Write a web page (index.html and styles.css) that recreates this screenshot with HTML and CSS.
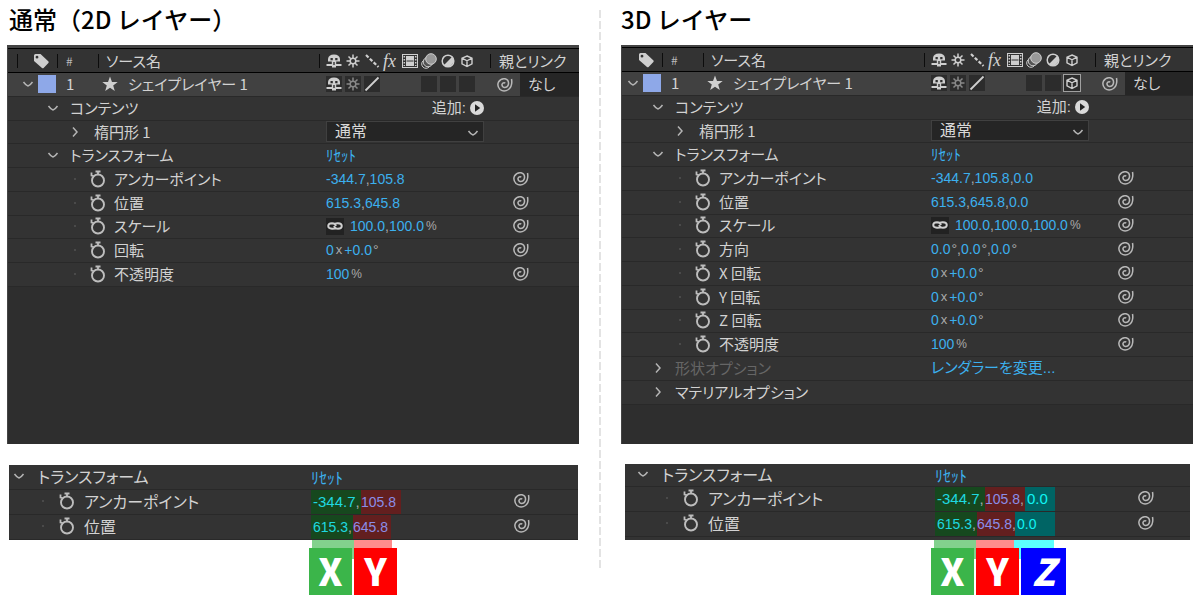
FILE: index.html
```html
<!DOCTYPE html>
<html lang="ja">
<head>
    <meta charset="UTF-8">
    <title>2D レイヤーと 3D レイヤー</title>
    <link rel="stylesheet" href="styles.css">
</head>
<body>
<!-- アイコン定義 -->
<svg class="defs" width="0" height="0" aria-hidden="true">
    <symbol id="tag" viewBox="0 0 16 16"><path fill="currentColor" fill-rule="evenodd" d="M1 2.5Q1 1 2.500 1H7.500L15.500 8.500Q16 9.200 15.400 9.900L10.600 15Q9.800 15.600 9 15L1 8ZM4 2.800A1.400 1.400 0 1 0 4 5.600A1.400 1.400 0 1 0 4 2.800Z"/></symbol>
    <symbol id="star" viewBox="0 0 16 16"><path fill="currentColor" d="M8 0.500L10 6H15.700L11.200 9.500L12.800 15L8 11.700L3.200 15L4.800 9.500L0.300 6H6Z"/></symbol>
    <symbol id="down" viewBox="0 0 12 12"><path fill="none" stroke="currentColor" stroke-width="1.5" d="M1.500 4Q4 7.500 6 8Q8 7.500 10.500 4"/></symbol>
    <symbol id="right" viewBox="0 0 12 12"><path fill="none" stroke="currentColor" stroke-width="1.5" d="M4 1.500L8 6L4 10.500"/></symbol>
    <symbol id="watch" viewBox="0 0 16 18"><g fill="none" stroke="currentColor"><circle cx="8" cy="10.500" r="6" stroke-width="1.900"/><path stroke-width="1.800" d="M5.500 1.500H10.500M8 1.500V5M1.500 2.500V5.500L3.500 6"/></g></symbol>
    <symbol id="whip" viewBox="0 0 16 16"><path fill="none" stroke="currentColor" stroke-width="1.500" d="M14.500 2Q15.800 9 11.500 12.500Q7 15.500 3 12.500Q-0.300 9 1.500 5Q4 1 8 1.800Q12 3 11.500 7Q10.800 10.500 7.500 10.500Q4.800 10 5 7.300Q6 5 8.300 6"/></symbol>
    <symbol id="shy" viewBox="0 0 16 16"><path fill="currentColor" fill-rule="evenodd" d="M2 8.500V6Q2.500 1.500 8 1.500Q13.500 1.500 14 6V8.500H10.200V11H15.500V13H10V14.500H6V13H0.500V11H5.800V8.500ZM4.500 5V7.200H6.800V5ZM9.200 5V7.200H11.500V5ZM7.300 9V12H8.700V9Z"/></symbol>
    <symbol id="sun" viewBox="0 0 16 16"><g fill="none" stroke="currentColor" stroke-width="1.500"><circle cx="8" cy="8" r="2.800"/><path d="M8 1.500V5M8 11V14.500M1.500 8H5M11 8H14.500M3.500 3.500L5.800 5.800M10.200 10.200L12.500 12.500M12.500 3.500L10.200 5.800M5.800 10.200L3.500 12.500"/></g></symbol>
    <symbol id="dots" viewBox="0 0 16 16"><path stroke="currentColor" stroke-width="2.200" stroke-dasharray="3.500 1.800" d="M2 2L14.500 14"/></symbol>
    <symbol id="line" viewBox="0 0 16 16"><path stroke="currentColor" stroke-width="1.800" d="M1.500 14.500L14.500 1.500"/></symbol>
    <symbol id="film" viewBox="0 0 16 16"><rect x="0.500" y="1.500" width="15" height="13" fill="none" stroke="currentColor"/><path fill="currentColor" d="M4 3H12V13H4Z"/><path stroke="currentColor" stroke-width="1.500" stroke-dasharray="1.500 1.500" d="M2.300 3V13M13.700 3V13"/><path stroke="#333" d="M4.500 8H11.500"/></symbol>
    <symbol id="blur" viewBox="0 0 16 16"><g stroke="currentColor"><circle cx="5" cy="11" r="4.300" fill="#333"/><circle cx="7" cy="9" r="4.800" fill="#555"/><circle cx="10" cy="6" r="5.300" fill="#999"/></g></symbol>
    <symbol id="adjust" viewBox="0 0 16 16"><circle cx="8" cy="8" r="5.800" fill="none" stroke="currentColor" stroke-width="1.500"/><path fill="currentColor" d="M12.200 3.800A6 6 0 0 1 3.800 12.200Z"/></symbol>
    <symbol id="cube" viewBox="0 0 16 16"><path fill="none" stroke="currentColor" stroke-width="1.400" d="M8 3L13 5.200V10.800L8 13.500L3 10.800V5.200ZM3 5.200L8 7.800L13 5.200M8 7.800V13.500"/></symbol>
    <symbol id="chain" viewBox="0 0 16 16"><path fill="none" stroke="currentColor" stroke-width="1.900" d="M9.500 9.500Q8 11 5 10.800Q1.200 10.500 1.200 8Q1.200 5.300 5 5.200Q8.500 5.200 8.800 8M6.500 6.500Q8 5 11 5.200Q14.800 5.500 14.800 8Q14.800 10.700 11 10.800Q7.500 10.800 7.200 8"/></symbol>
    <symbol id="play" viewBox="0 0 16 16"><circle cx="8" cy="8" r="7" fill="currentColor"/><path fill="#222" d="M6 4.200L11.200 8L6 11.800Z"/></symbol>
</svg>

<main class="compare">
    <section class="side">
        <h2>通常（2D レイヤー）</h2>
        <div class="timeline timeline-2d">
            <div class="head">
                <div class="col col-tag"><svg class="icon"><use href="#tag"/></svg></div>
                <div class="col col-num">#</div>
                <div class="col col-name">ソース名</div>
                <div class="col col-switch">
                    <svg class="icon"><use href="#shy"/></svg>
                    <svg class="icon"><use href="#sun"/></svg>
                    <svg class="icon"><use href="#dots"/></svg>
                    <i class="fx">fx</i>
                    <svg class="icon"><use href="#film"/></svg>
                    <svg class="icon"><use href="#blur"/></svg>
                    <svg class="icon"><use href="#adjust"/></svg>
                    <svg class="icon"><use href="#cube"/></svg>
                </div>
                <div class="col col-parent">親とリンク</div>
            </div>
            <div class="row layer">
                <div class="label">
                    <svg class="arrow"><use href="#down"/></svg>
                    <span class="swatch"></span>
                    <span class="num">1</span>
                    <svg class="icon"><use href="#star"/></svg>
                    <span class="name">シェイプレイヤー 1</span>
                </div>
                <div class="switches">
                    <button class="sw" aria-label="シャイ"><svg class="icon"><use href="#shy"/></svg></button>
                    <button class="sw dim" aria-label="コラップス"><svg class="icon"><use href="#sun"/></svg></button>
                    <button class="sw" aria-label="画質"><svg class="icon"><use href="#line"/></svg></button>
                    <span class="blank"></span>
                    <span class="blank"></span>
                    <button class="sw" aria-label="モーションブラー"></button>
                    <button class="sw" aria-label="調整レイヤー"></button>
                    <button class="sw" aria-label="3D レイヤー"></button>
                </div>
                <div class="link">
                    <svg class="icon"><use href="#whip"/></svg>
                    <select class="parent" aria-label="親とリンク"><option>なし</option></select>
                </div>
            </div>
            <div class="row group">
                <div class="label"><svg class="arrow"><use href="#down"/></svg>コンテンツ</div>
                <div class="value add">追加:<button class="play" aria-label="追加"><svg class="icon"><use href="#play"/></svg></button></div>
            </div>
            <div class="row sub">
                <div class="label"><svg class="arrow"><use href="#right"/></svg>楕円形 1</div>
                <div class="value">
                    <div class="mode">
                        <select aria-label="描画モード"><option>通常</option></select>
                        <svg class="arrow"><use href="#down"/></svg>
                    </div>
                </div>
            </div>
            <div class="row group">
                <div class="label"><svg class="arrow"><use href="#down"/></svg>トランスフォーム</div>
                <div class="value"><button class="reset">ﾘｾｯﾄ</button></div>
            </div>
            <div class="row prop">
                <div class="label"><svg class="watch"><use href="#watch"/></svg>アンカーポイント</div>
                <div class="value"><button>-344.7</button>,<button>105.8</button></div>
                <div class="link"><svg class="icon"><use href="#whip"/></svg></div>
            </div>
            <div class="row prop">
                <div class="label"><svg class="watch"><use href="#watch"/></svg>位置</div>
                <div class="value"><button>615.3</button>,<button>645.8</button></div>
                <div class="link"><svg class="icon"><use href="#whip"/></svg></div>
            </div>
            <div class="row prop">
                <div class="label"><svg class="watch"><use href="#watch"/></svg>スケール</div>
                <div class="value"><button class="chain" aria-label="縦横比を固定"><svg class="icon"><use href="#chain"/></svg></button><button>100.0</button>,<button>100.0</button><small>%</small></div>
                <div class="link"><svg class="icon"><use href="#whip"/></svg></div>
            </div>
            <div class="row prop">
                <div class="label"><svg class="watch"><use href="#watch"/></svg>回転</div>
                <div class="value"><button>0</button><span class="times">x</span><button>+0.0</button><span class="deg">°</span></div>
                <div class="link"><svg class="icon"><use href="#whip"/></svg></div>
            </div>
            <div class="row prop">
                <div class="label"><svg class="watch"><use href="#watch"/></svg>不透明度</div>
                <div class="value"><button>100</button><small>%</small></div>
                <div class="link"><svg class="icon"><use href="#whip"/></svg></div>
            </div>
        </div>

        <div class="detail detail-2d">
            <div class="row group">
                <div class="label"><svg class="arrow"><use href="#down"/></svg>トランスフォーム</div>
                <div class="value"><button class="reset">ﾘｾｯﾄ</button></div>
            </div>
            <div class="row prop anchor">
                <div class="label"><svg class="watch"><use href="#watch"/></svg>アンカーポイント</div>
                <div class="value"><span class="axis x"><button>-344.7</button>,</span><span class="axis y"><button>105.8</button></span></div>
                <div class="link"><svg class="icon"><use href="#whip"/></svg></div>
            </div>
            <div class="row prop">
                <div class="label"><svg class="watch"><use href="#watch"/></svg>位置</div>
                <div class="value"><span class="axis x"><button>615.3</button>,</span><span class="axis y"><button>645.8</button></span></div>
                <div class="link"><svg class="icon"><use href="#whip"/></svg></div>
            </div>
        </div>
        <div class="legend legend-2d">
            <div class="strips"><span class="x"></span><span class="y"></span></div>
            <div class="badges"><b class="x">X</b><b class="y">Y</b></div>
        </div>
    </section>

    <div class="divider"></div>

    <section class="side">
        <h2 class="title-3d">3D レイヤー</h2>
        <div class="timeline timeline-3d">
            <div class="head">
                <div class="col col-tag"><svg class="icon"><use href="#tag"/></svg></div>
                <div class="col col-num">#</div>
                <div class="col col-name">ソース名</div>
                <div class="col col-switch">
                    <svg class="icon"><use href="#shy"/></svg>
                    <svg class="icon"><use href="#sun"/></svg>
                    <svg class="icon"><use href="#dots"/></svg>
                    <i class="fx">fx</i>
                    <svg class="icon"><use href="#film"/></svg>
                    <svg class="icon"><use href="#blur"/></svg>
                    <svg class="icon"><use href="#adjust"/></svg>
                    <svg class="icon"><use href="#cube"/></svg>
                </div>
                <div class="col col-parent">親とリンク</div>
            </div>
            <div class="row layer">
                <div class="label">
                    <svg class="arrow"><use href="#down"/></svg>
                    <span class="swatch"></span>
                    <span class="num">1</span>
                    <svg class="icon"><use href="#star"/></svg>
                    <span class="name">シェイプレイヤー 1</span>
                </div>
                <div class="switches">
                    <button class="sw" aria-label="シャイ"><svg class="icon"><use href="#shy"/></svg></button>
                    <button class="sw dim" aria-label="コラップス"><svg class="icon"><use href="#sun"/></svg></button>
                    <button class="sw" aria-label="画質"><svg class="icon"><use href="#line"/></svg></button>
                    <span class="blank"></span>
                    <span class="blank"></span>
                    <button class="sw" aria-label="モーションブラー"></button>
                    <button class="sw" aria-label="調整レイヤー"></button>
                    <button class="sw on" aria-label="3D レイヤー"><svg class="icon"><use href="#cube"/></svg></button>
                </div>
                <div class="link">
                    <svg class="icon"><use href="#whip"/></svg>
                    <select class="parent" aria-label="親とリンク"><option>なし</option></select>
                </div>
            </div>
            <div class="row group">
                <div class="label"><svg class="arrow"><use href="#down"/></svg>コンテンツ</div>
                <div class="value add">追加:<button class="play" aria-label="追加"><svg class="icon"><use href="#play"/></svg></button></div>
            </div>
            <div class="row sub">
                <div class="label"><svg class="arrow"><use href="#right"/></svg>楕円形 1</div>
                <div class="value">
                    <div class="mode">
                        <select aria-label="描画モード"><option>通常</option></select>
                        <svg class="arrow"><use href="#down"/></svg>
                    </div>
                </div>
            </div>
            <div class="row group">
                <div class="label"><svg class="arrow"><use href="#down"/></svg>トランスフォーム</div>
                <div class="value"><button class="reset">ﾘｾｯﾄ</button></div>
            </div>
            <div class="row prop">
                <div class="label"><svg class="watch"><use href="#watch"/></svg>アンカーポイント</div>
                <div class="value"><button>-344.7</button>,<button>105.8</button>,<button>0.0</button></div>
                <div class="link"><svg class="icon"><use href="#whip"/></svg></div>
            </div>
            <div class="row prop">
                <div class="label"><svg class="watch"><use href="#watch"/></svg>位置</div>
                <div class="value"><button>615.3</button>,<button>645.8</button>,<button>0.0</button></div>
                <div class="link"><svg class="icon"><use href="#whip"/></svg></div>
            </div>
            <div class="row prop">
                <div class="label"><svg class="watch"><use href="#watch"/></svg>スケール</div>
                <div class="value"><button class="chain" aria-label="縦横比を固定"><svg class="icon"><use href="#chain"/></svg></button><button>100.0</button>,<button>100.0</button>,<button>100.0</button><small>%</small></div>
                <div class="link"><svg class="icon"><use href="#whip"/></svg></div>
            </div>
            <div class="row prop">
                <div class="label"><svg class="watch"><use href="#watch"/></svg>方向</div>
                <div class="value"><button>0.0</button><span class="deg">°</span>,<button>0.0</button><span class="deg">°</span>,<button>0.0</button><span class="deg">°</span></div>
                <div class="link"><svg class="icon"><use href="#whip"/></svg></div>
            </div>
            <div class="row prop">
                <div class="label"><svg class="watch"><use href="#watch"/></svg>X 回転</div>
                <div class="value"><button>0</button><span class="times">x</span><button>+0.0</button><span class="deg">°</span></div>
                <div class="link"><svg class="icon"><use href="#whip"/></svg></div>
            </div>
            <div class="row prop">
                <div class="label"><svg class="watch"><use href="#watch"/></svg>Y 回転</div>
                <div class="value"><button>0</button><span class="times">x</span><button>+0.0</button><span class="deg">°</span></div>
                <div class="link"><svg class="icon"><use href="#whip"/></svg></div>
            </div>
            <div class="row prop">
                <div class="label"><svg class="watch"><use href="#watch"/></svg>Z 回転</div>
                <div class="value"><button>0</button><span class="times">x</span><button>+0.0</button><span class="deg">°</span></div>
                <div class="link"><svg class="icon"><use href="#whip"/></svg></div>
            </div>
            <div class="row prop">
                <div class="label"><svg class="watch"><use href="#watch"/></svg>不透明度</div>
                <div class="value"><button>100</button><small>%</small></div>
                <div class="link"><svg class="icon"><use href="#whip"/></svg></div>
            </div>
            <div class="row group off">
                <div class="label"><svg class="arrow"><use href="#right"/></svg>形状オプション</div>
                <div class="value"><button class="renderer">レンダラーを変更...</button></div>
            </div>
            <div class="row group">
                <div class="label"><svg class="arrow"><use href="#right"/></svg>マテリアルオプション</div>
            </div>
        </div>

        <div class="detail detail-3d">
            <div class="row group">
                <div class="label"><svg class="arrow"><use href="#down"/></svg>トランスフォーム</div>
                <div class="value"><button class="reset">ﾘｾｯﾄ</button></div>
            </div>
            <div class="row prop anchor">
                <div class="label"><svg class="watch"><use href="#watch"/></svg>アンカーポイント</div>
                <div class="value"><span class="axis x"><button>-344.7</button>,</span><span class="axis y"><button>105.8</button>,</span><span class="axis z"><button>0.0</button></span></div>
                <div class="link"><svg class="icon"><use href="#whip"/></svg></div>
            </div>
            <div class="row prop">
                <div class="label"><svg class="watch"><use href="#watch"/></svg>位置</div>
                <div class="value"><span class="axis x"><button>615.3</button>,</span><span class="axis y"><button>645.8</button>,</span><span class="axis z"><button>0.0</button></span></div>
                <div class="link"><svg class="icon"><use href="#whip"/></svg></div>
            </div>
        </div>
        <div class="legend legend-3d">
            <div class="strips"><span class="x"></span><span class="y"></span><span class="z"></span></div>
            <div class="badges"><b class="x">X</b><b class="y">Y</b><b class="z">Z</b></div>
        </div>
    </section>
</main>
</body>
</html>
```
FILE: styles.css
```css
* {
    box-sizing: border-box;
}

body {
    margin: 0;
    background: #fff;
    font-family: "Noto Sans CJK JP", sans-serif;
}

.defs {
    display: none;
}

.compare {
    display: grid;
    grid-template-columns: 1fr 42px 1fr;
    padding: 0 7px;
}

.side {
    min-width: 0;
}

h2 {
    margin: 0;
    padding-left: 2px;
    height: 45px;
    line-height: 38px;
    font-size: 24px;
    font-weight: 500;
    color: #000;
}

.title-3d {
    padding-left: 0;
}

.divider {
    justify-self: center;
    width: 2px;
    margin: 10px 0 26px;
    background: repeating-linear-gradient(#e3e3e3 0 8px, #fff 8px 11px);
}

/* パネル共通 */
.timeline,
.detail {
    font-size: 15px;
    line-height: 20px;
    font-feature-settings: "palt";
    color: #d2d2d2;
}

.timeline {
    --first: 0px;
    --last: 98px;
    min-height: 399px;
    background: #2e2e2e;
    border-left: 1px solid #444;
    border-top: 2px solid #444;
}

.timeline-2d {
    --first: 9px;
    --last: 89px;
    border-top-width: 3px;
}

.icon {
    flex: none;
    display: block;
    width: 16px;
    height: 16px;
    color: #cfcfcf;
}

.arrow {
    flex: none;
    width: 12px;
    height: 12px;
    color: #b4b4b4;
}

.watch {
    flex: none;
    width: 16px;
    height: 18px;
    color: #bdbdbd;
}

button,
select {
    margin: 0;
    padding: 0;
    border: 0;
    background: none;
    font: inherit;
    font-feature-settings: inherit;
    color: inherit;
    appearance: none;
}

/* 見出し行 */
.head {
    display: grid;
    grid-template-columns: 40px 41px 1fr 171px var(--last);
    align-items: center;
    height: 25px;
    padding-left: var(--first);
    background: #333;
    border-top: 1px solid #000;
    border-bottom: 1px solid #000;
}

.col {
    display: flex;
    align-items: center;
    height: 14px;
    border-left: 1px solid #0c0c0c;
    white-space: nowrap;
}

.col-tag {
    padding-left: 15px;
}

.timeline-3d .col-tag {
    border-left-color: transparent;
}

.col-num {
    padding-left: 8px;
    font-size: 12px;
    color: #bbb;
}

.col-name {
    padding-left: 7px;
}

.col-switch {
    gap: 3px;
    padding-left: 6px;
}

.col-parent {
    padding-left: 8px;
}

.fx {
    width: 16px;
    font: italic 18px/16px "Liberation Serif", serif;
}

/* 行 */
.row {
    display: grid;
    grid-template-columns: 1fr 164px var(--last);
    height: 24px;
    padding-left: var(--first);
    background: #333;
    border-bottom: 1px solid #292929;
}

.timeline .row:nth-child(4n) {
    height: 23px;
}

.label,
.value,
.link,
.switches {
    display: flex;
    align-items: center;
    min-width: 0;
    white-space: nowrap;
}

.label,
.link,
.switches,
.timeline .value {
    padding-bottom: 2px;
}

.group .label {
    gap: 11px;
    padding-left: 30px;
}

.sub .label {
    gap: 13px;
    padding-left: 52px;
}

.prop .label {
    padding-left: 57px;
}

.prop .label::before {
    content: "";
    width: 2px;
    height: 2px;
    margin-right: 14px;
    background: #4a4a4a;
}

.prop .watch {
    margin-right: 8px;
}

.link {
    padding-left: 23px;
}

.link .icon {
    color: #b8b8b8;
}

.off .label {
    color: #666;
}

.off .arrow {
    color: #b4b4b4;
}

/* レイヤー行 */
.layer {
    background: #414141;
}

.layer .label {
    padding-left: 5px;
}

.swatch {
    width: 18px;
    height: 18px;
    margin: 0 10px 0 4px;
    background: #8ea8e8;
}

.num {
    width: 36px;
}

.name {
    margin-left: 10px;
}

.switches {
    gap: 3px;
}

.sw,
.blank {
    width: 16px;
    height: 16px;
}

.sw {
    background: #2c2c2c;
}

.sw.dim .icon {
    color: #888;
}

.sw.on {
    outline: 1px solid #a0a0a0;
}

.layer .link {
    gap: 7px;
    padding: 0 0 0 7px;
}

.parent {
    align-self: stretch;
    flex: 1;
    padding: 0 0 2px 8px;
    background: #262626;
}

/* 値 */
.value {
    font-family: "Liberation Sans", "Noto Sans CJK JP", sans-serif;
    font-size: 14px;
    color: #aaa;
}

.value button {
    color: #3cb0ee;
}

.value small {
    margin-left: 2px;
    font-size: 12px;
}

.value .times {
    padding: 0 2px;
    font-size: 13px;
}

.value .deg {
    padding-left: 1px;
}

.value .reset {
    font-family: "Noto Sans CJK JP", sans-serif;
    font-size: 15px;
    font-feature-settings: normal;
}

.value .renderer {
    font-size: 15px;
}

.value .chain {
    width: 18px;
    height: 17px;
    margin-right: 6px;
    padding-left: 1px;
    background: #222;
}

.value.add {
    justify-content: flex-end;
    gap: 3px;
    padding-right: 5px;
    font-size: 15px;
    color: #d2d2d2;
}

.value .play .icon {
    color: #dadada;
}

.mode {
    display: grid;
    align-items: center;
    width: 158px;
    height: 21px;
    background: #252525;
    border: 1px solid #404040;
    font-size: 16px;
    color: #d8d8d8;
}

.mode select,
.mode .arrow {
    grid-area: 1 / 1;
}

.mode select {
    padding: 0 0 2px 8px;
}

.mode .arrow {
    justify-self: end;
    margin-right: 4px;
    pointer-events: none;
}

/* 拡大表示 */
.detail {
    --first: 0px;
    margin: 21px 1px 0 2px;
    background: #333;
    font-size: 16px;
}

.detail-3d {
    --first: 8px;
    margin: 20px 3px 0 4px;
    padding-bottom: 3px;
}

.detail .row {
    grid-template-columns: 1fr 202px 65px;
    height: 25px;
}

.detail-3d .row {
    grid-template-columns: 1fr 202px 53px;
}

.detail-3d .group {
    height: 23px;
}

.detail .group .label {
    gap: 13px;
    padding-left: 4px;
}

.detail .prop .label {
    padding-left: 33px;
}

.detail .prop .label::before {
    margin-right: 15px;
}

.detail .watch {
    margin-right: 9px;
}

.detail .reset {
    font-size: 16px;
}

.detail .prop .value {
    align-items: stretch;
}

.detail .link {
    padding-left: 1px;
}

.axis {
    display: flex;
    align-items: center;
    width: 42px;
    padding-left: 2px;
}

.axis.x {
    background: #16481e;
}

.axis.y {
    width: 38px;
    padding-left: 0;
    background: #631f1f;
}

.axis.z {
    width: 40px;
    background: #006464;
}

.anchor .axis.x {
    width: 50px;
}

.anchor .axis.y {
    width: 40px;
}

.anchor .axis.z {
    width: 30px;
}

.anchor .axis {
    font-size: 15px;
}

.anchor .axis.y {
    font-size: 14px;
}

.axis.x button {
    color: #1fd8e0;
}

.axis.y button {
    color: #8a8ee8;
}

.axis.z button {
    color: #10f4f4;
}

.legend-2d {
    padding-left: 302px;
}

.legend-3d {
    padding-left: 310px;
}

.strips {
    display: flex;
    height: 19px;
    margin-bottom: -11px;
    padding-left: 3px;
}

.strips .x {
    width: 42px;
    background: #82d18d;
}

.strips .y {
    width: 38px;
    background: #ff8c8c;
}

.strips .z {
    width: 40px;
    background: #5cffff;
}

.badges {
    display: flex;
    gap: 2px;
}

.badges b {
    width: 43px;
    height: 47px;
    font-size: 37px;
    line-height: 45px;
    font-weight: 900;
    text-align: center;
    color: #fff;
}

.badges .x {
    background: #3bb54a;
}

.badges .y {
    background: #f00;
}

.badges .z {
    width: 45px;
    background: #00f;
    font-style: italic;
}
```
